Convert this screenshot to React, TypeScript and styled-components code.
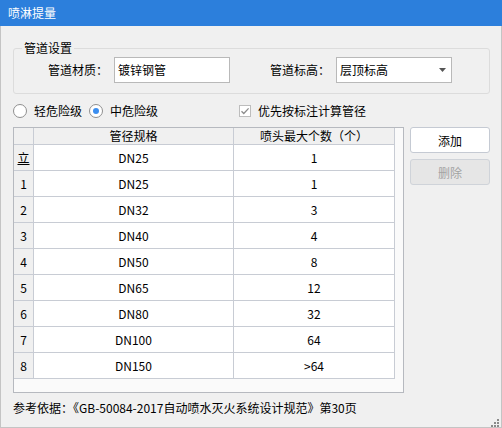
import React from 'react';
import styled, { createGlobalStyle } from 'styled-components';

const GlobalStyle = createGlobalStyle`
  html, body {
    margin: 0;
    padding: 0;
    background: #f0f0f0;
  }
  body {
    font-family: "Noto Sans CJK SC", "Noto Sans", sans-serif;
    font-size: 12px;
    color: #000;
  }
`;

const rows = [
  { head: '立', spec: 'DN25', count: '1' },
  { head: '1', spec: 'DN25', count: '1' },
  { head: '2', spec: 'DN32', count: '3' },
  { head: '3', spec: 'DN40', count: '4' },
  { head: '4', spec: 'DN50', count: '8' },
  { head: '5', spec: 'DN65', count: '12' },
  { head: '6', spec: 'DN80', count: '32' },
  { head: '7', spec: 'DN100', count: '64' },
  { head: '8', spec: 'DN150', count: '>64' },
];

const App = () => {
  return (
    <>
      <GlobalStyle />
      <Window>
        <TitleBar>喷淋提量</TitleBar>
        <Body>
          <GroupBox>
            <Legend>管道设置</Legend>
            <FieldRow>
              <FieldLabel>管道材质：</FieldLabel>
              <TextBox>镀锌钢管</TextBox>
              <FieldLabel $gap={40}>管道标高：</FieldLabel>
              <SelectBox>
                层顶标高
                <svg width="7" height="4" viewBox="0 0 7 4">
                  <path d="M0 0h7L3.5 4z" fill="#555" />
                </svg>
              </SelectBox>
            </FieldRow>
          </GroupBox>

          <OptionsRow>
            <Radio />
            <OptionLabel>轻危险级</OptionLabel>
            <Radio $checked />
            <OptionLabel>中危险级</OptionLabel>
            <CheckBox>
              <svg width="10" height="10" viewBox="0 0 10 10">
                <path d="M1.5 5.2l2.3 2.3L8.6 2.4" fill="none" stroke="#8c8c8c" strokeWidth="1.3" />
              </svg>
            </CheckBox>
            <OptionLabel>优先按标注计算管径</OptionLabel>
          </OptionsRow>

          <MainArea>
            <GridFrame>
              <Grid>
                <Cell $kind="corner" />
                <Cell $kind="header">管径规格</Cell>
                <Cell $kind="header">喷头最大个数（个）</Cell>
                {rows.map((r, i) => (
                  <React.Fragment key={i}>
                    <Cell $kind="rowhead" $underline={i === 0}>{r.head}</Cell>
                    <Cell $kind="data">{r.spec}</Cell>
                    <Cell $kind="data">{r.count}</Cell>
                  </React.Fragment>
                ))}
              </Grid>
            </GridFrame>
            <ButtonColumn>
              <ActionButton>添加</ActionButton>
              <ActionButton $disabled>删除</ActionButton>
            </ButtonColumn>
          </MainArea>

          <Footer>参考依据：《GB-50084-2017自动喷水灭火系统设计规范》第30页</Footer>
          <Grip>
            <svg width="10" height="10" viewBox="0 0 10 10">
              {[
                [8, 0], [8, 3], [5, 3], [8, 6], [5, 6], [2, 6], [8, 9], [5, 9], [2, 9],
              ].map(([x, y], i) => (
                <rect key={i} x={x} y={y - 0} width="2" height="2" fill="#8a8a8a" />
              ))}
            </svg>
          </Grip>
        </Body>
      </Window>
    </>
  );
};

const Window = styled.div`
  width: 502px;
  height: 428px;
  display: flex;
  flex-direction: column;
  box-sizing: border-box;
`;

const TitleBar = styled.div`
  height: 26px;
  flex: none;
  background: #2c7fdc;
  color: #fff;
  font-size: 12px;
  line-height: 26px;
  padding-left: 8px;
`;

const Body = styled.div`
  flex: 1;
  position: relative;
  display: flex;
  flex-direction: column;
  background: #f0f0f0;
  border: 1px solid #c4c4c4;
  border-top: none;
  padding: 0 11px 0 12px;
`;

const GroupBox = styled.fieldset`
  margin: 14px 0 0 0;
  padding: 1px 0 10px 0;
  border: 1px solid #dcdcdc;
  border-radius: 3px;
  min-inline-size: 0;
`;

const Legend = styled.legend`
  margin-left: 8px;
  padding: 0 2px;
  font-size: 12px;
  line-height: 16px;
`;

const FieldRow = styled.div`
  display: flex;
  align-items: center;
  padding-left: 34px;
`;

const FieldLabel = styled.span<{ $gap?: number }>`
  width: 60px;
  margin-left: ${(p) => p.$gap ?? 0}px;
  margin-right: 6px;
  line-height: 16px;
`;

const TextBox = styled.div`
  width: 116px;
  height: 26px;
  box-sizing: border-box;
  border: 1px solid #b9b9b9;
  background: #fff;
  padding-left: 3px;
  line-height: 24px;
`;

const SelectBox = styled(TextBox)`
  display: flex;
  align-items: center;
  justify-content: space-between;
  padding-right: 5px;
`;

const OptionsRow = styled.div`
  height: 33px;
  display: flex;
  align-items: center;
`;

const Radio = styled.span<{ $checked?: boolean }>`
  width: 14px;
  height: 14px;
  box-sizing: border-box;
  border-radius: 50%;
  border: 1px solid #8f8f8f;
  background: #fff;
  display: flex;
  align-items: center;
  justify-content: center;
  margin-right: 7px;

  &::after {
    content: '';
    width: 6px;
    height: 6px;
    border-radius: 50%;
    background: ${(p) => (p.$checked ? '#3b8ef0' : 'transparent')};
  }
`;

const OptionLabel = styled.span`
  line-height: 16px;
  margin-right: 7px;
`;

const CheckBox = styled.span`
  width: 12px;
  height: 12px;
  box-sizing: border-box;
  border: 1px solid #bdbdbd;
  background: #fff;
  margin-left: 74px;
  margin-right: 7px;
  display: flex;
  align-items: center;
  justify-content: center;
`;

const MainArea = styled.div`
  display: flex;
  gap: 6px;
`;

const GridFrame = styled.div`
  width: 391px;
  height: 266px;
  box-sizing: border-box;
  border: 1px solid #b6b9bf;
  background: #fafafa;
`;

const Grid = styled.div`
  display: grid;
  grid-template-columns: 20px 200px 161px;
  grid-template-rows: 17px;
  grid-auto-rows: 26px;
`;

const Cell = styled.div<{ $kind: 'corner' | 'header' | 'rowhead' | 'data'; $underline?: boolean }>`
  box-sizing: border-box;
  border-right: 1px solid #c8ccd4;
  border-bottom: 1px solid #c8ccd4;
  background: ${(p) => (p.$kind === 'data' ? '#fff' : '#f0f0f0')};
  display: flex;
  align-items: center;
  justify-content: center;
  font-size: 12px;
  line-height: 16px;
  text-decoration: ${(p) => (p.$underline ? 'underline' : 'none')};
  padding-top: ${(p) => (p.$kind === 'header' || p.$kind === 'corner' ? 0 : 1)}px;
`;

const ButtonColumn = styled.div`
  display: flex;
  flex-direction: column;
  gap: 6px;
`;

const ActionButton = styled.button<{ $disabled?: boolean }>`
  width: 80px;
  height: 26px;
  box-sizing: border-box;
  border: 1px solid ${(p) => (p.$disabled ? '#cfd3d9' : '#c5cad3')};
  border-radius: 3px;
  background: ${(p) => (p.$disabled ? '#e6e6e6' : '#fff')};
  color: ${(p) => (p.$disabled ? '#a3a3a3' : '#000')};
  font-family: inherit;
  font-size: 12px;
  padding: 0;
`;

const Footer = styled.div`
  line-height: 30px;
  white-space: nowrap;
`;

const Grip = styled.div`
  position: absolute;
  right: 2px;
  bottom: 1px;
  width: 10px;
  height: 11px;
`;

export default App;
